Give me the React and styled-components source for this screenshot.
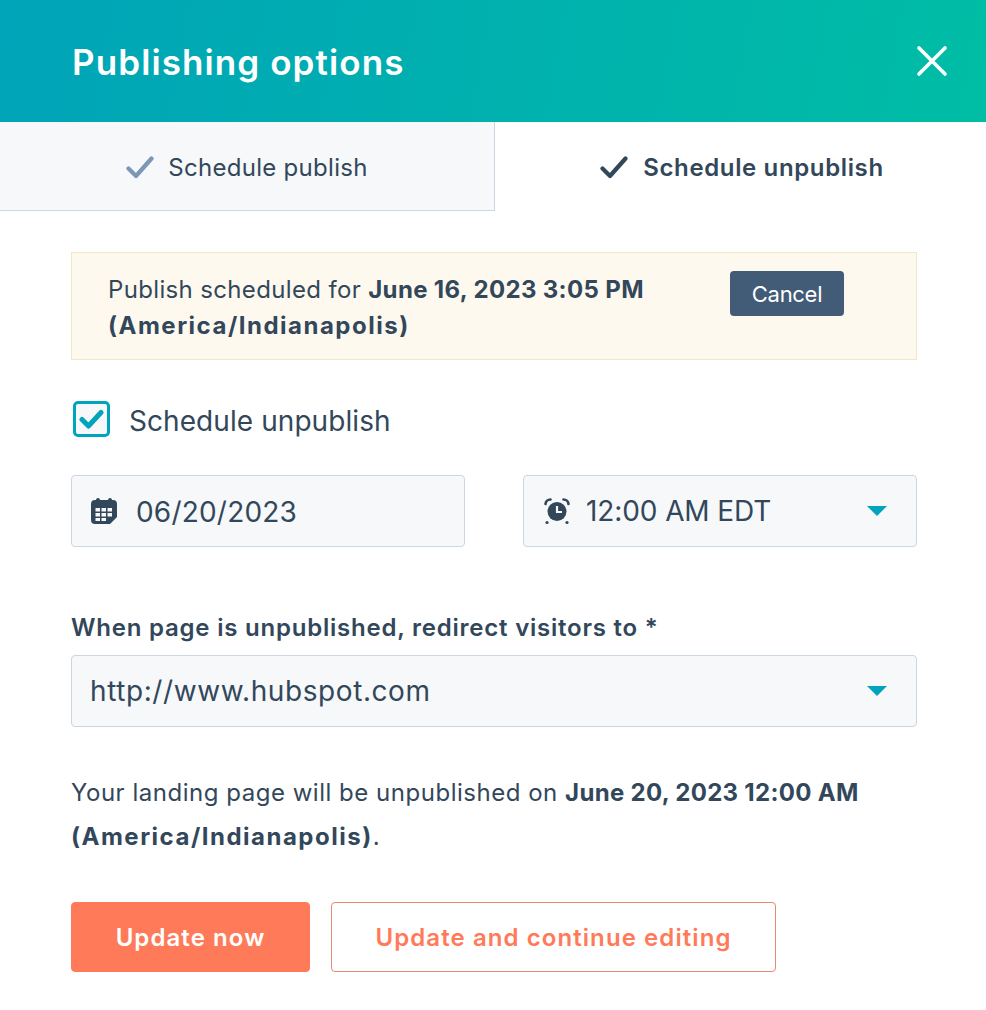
import React from "react";
import styled, { createGlobalStyle } from "styled-components";

const GlobalStyle = createGlobalStyle`
    html, body {
        margin: 0;
        padding: 0;
        background: #ffffff;
    }
    body {
        font-family: "Inter", "Liberation Sans", sans-serif;
        color: #33475b;
    }
`;

const Modal = styled.div`
    width: 986px;
    height: 1010px;
    display: flex;
    flex-direction: column;
    overflow: hidden;
`;

const Header = styled.header`
    height: 122px;
    flex-shrink: 0;
    display: flex;
    align-items: center;
    justify-content: space-between;
    padding: 0 38px 0 72px;
    background: linear-gradient(100deg, #00a4b8 0%, #00bda5 100%);
`;

const Title = styled.h1`
    margin: 0;
    padding-top: 2px;
    color: #ffffff;
    font-size: 35px;
    font-weight: 600;
    letter-spacing: 1.1px;
`;

const CloseButton = styled.button`
    width: 32px;
    height: 32px;
    padding: 0;
    border: 0;
    background: none;
    display: flex;
`;

const Tabs = styled.div`
    display: flex;
    height: 89px;
    flex-shrink: 0;
`;

const Tab = styled.div`
    flex: ${(p) => (p.$active ? "1" : "0 0 495px")};
    display: flex;
    align-items: center;
    justify-content: center;
    gap: ${(p) => (p.$active ? "15px" : "14px")};
    padding-top: ${(p) => (p.$active ? "1px" : "2px")};
    padding-left: ${(p) => (p.$active ? "3px" : "0")};
    font-size: 24px;
    letter-spacing: ${(p) => (p.$active ? "0.63px" : "0.3px")};
    font-weight: ${(p) => (p.$active ? 600 : 400)};
    background: ${(p) => (p.$active ? "#ffffff" : "#f6f8fa")};
    border-right: ${(p) => (p.$active ? "0" : "1px solid #cbd6e2")};
    border-bottom: ${(p) => (p.$active ? "0" : "1px solid #cbd6e2")};
    box-sizing: border-box;
`;

const Content = styled.main`
    padding: 41px 69px 0 71px;
    display: flex;
    flex-direction: column;
`;

const Notice = styled.div`
    height: 108px;
    box-sizing: border-box;
    display: flex;
    align-items: flex-start;
    padding: 18px 0 0 36px;
    background: #fef9ef;
    border: 1px solid #f2e8c9;
`;

const NoticeText = styled.p`
    margin: 1px 0 0;
    width: 586px;
    font-size: 24px;
    line-height: 36px;
    letter-spacing: 0.35px;
`;

const Zone = styled.b`
    letter-spacing: 1.5px;
`;

const CancelButton = styled.button`
    width: 114px;
    height: 45px;
    margin-left: 36px;
    border: 0;
    border-radius: 4px;
    background: #425b76;
    color: #ffffff;
    font-family: inherit;
    font-size: 22px;
    letter-spacing: -0.3px;
`;

const CheckRow = styled.label`
    display: flex;
    align-items: center;
    gap: 19px;
    margin: 41px 0 39px 2px;
    height: 35px;
    font-size: 28px;
    letter-spacing: 0.07px;
`;

const CheckText = styled.span`
    padding-top: 4px;
`;

const CheckBox = styled.span`
    width: 37px;
    height: 36px;
    box-sizing: border-box;
    border: 3px solid #00a4bd;
    border-radius: 5px;
    background: #f6f8fa;
    display: flex;
    align-items: center;
    justify-content: center;
`;

const FieldRow = styled.div`
    display: flex;
    justify-content: space-between;
`;

const Field = styled.div`
    width: ${(p) => p.$width || "394px"};
    height: 72px;
    box-sizing: border-box;
    display: flex;
    align-items: center;
    gap: ${(p) => p.$gap || "19px"};
    padding: 0 29px 0 ${(p) => p.$left || "19px"};
    background: #f6f8fa;
    border: 1px solid #cbd6e2;
    border-radius: 4px;
    font-size: 28px;
`;

const FieldValue = styled.span`
    flex: 1;
    padding-top: ${(p) => p.$drop || "0"};
    letter-spacing: ${(p) => p.$spacing || "0"};
`;

const Caret = styled.span`
    width: 0;
    height: 0;
    border-left: 10px solid transparent;
    border-right: 10px solid transparent;
    border-top: 10px solid #00a4bd;
`;

const Label = styled.div`
    margin: 66px 0 12px;
    font-size: 24px;
    line-height: 30px;
    font-weight: 600;
    letter-spacing: 0.78px;
`;

const Summary = styled.p`
    margin: 44px 0 43px;
    font-size: 24px;
    line-height: 44px;
    letter-spacing: 0.52px;
`;

const Bold = styled.b`
    letter-spacing: 0.3px;
`;

const Actions = styled.div`
    display: flex;
    gap: 21px;
`;

const ActionButton = styled.button`
    width: ${(p) => p.$width};
    height: 70px;
    box-sizing: border-box;
    border: 1px solid ${(p) => (p.$primary ? "#ff7a59" : "#e58a6f")};
    border-radius: 4px;
    background: ${(p) => (p.$primary ? "#ff7a59" : "#ffffff")};
    color: ${(p) => (p.$primary ? "#ffffff" : "#ff7a59")};
    font-family: inherit;
    font-size: 24px;
    font-weight: 600;
    letter-spacing: 1.08px;
`;

function Check({ color }) {
    return (
        <svg width="28" height="24" viewBox="0 0 28 24" fill="none">
            <path d="M2.5 13.5 L10 21 L25.5 3.5" stroke={color} strokeWidth="4.2" strokeLinecap="round" strokeLinejoin="round" />
        </svg>
    );
}

function CalendarIcon() {
    return (
        <svg width="26" height="28" viewBox="0 0 26 28">
            <path d="M5 3 a2 2 0 0 1 4 0 h8 a2 2 0 0 1 4 0 h1 a4 4 0 0 1 4 4 v13 l-7 7 H4 a4 4 0 0 1 -4 -4 V7 a4 4 0 0 1 4 -4 z" fill="#33475b" />
            <g fill="#f6f8fa">
                <rect x="4.5" y="11" width="4.5" height="3.5" />
                <rect x="10.5" y="11" width="4.5" height="3.5" />
                <rect x="16.5" y="11" width="4.5" height="3.5" />
                <rect x="4.5" y="16" width="4.5" height="3.5" />
                <rect x="10.5" y="16" width="4.5" height="3.5" />
                <rect x="16.5" y="16" width="4.5" height="3.5" />
                <rect x="4.5" y="21" width="4.5" height="3" />
                <rect x="10.5" y="21" width="4.5" height="3" />
            </g>
        </svg>
    );
}

function ClockIcon() {
    return (
        <svg width="28" height="28" viewBox="0 0 28 28" fill="none">
            <circle cx="14" cy="14.5" r="9.5" fill="#33475b" />
            <path d="M14 9 V15 H19" stroke="#f6f8fa" strokeWidth="2.2" />
            <path d="M2.5 7 A5 5 0 0 1 7.5 2.5 M25.5 7 A5 5 0 0 0 20.5 2.5" stroke="#33475b" strokeWidth="2.6" strokeLinecap="round" />
            <circle cx="4" cy="25.5" r="1.6" fill="#33475b" />
            <circle cx="24" cy="25.5" r="1.6" fill="#33475b" />
        </svg>
    );
}

export default function App() {
    return (
        <Modal>
            <GlobalStyle />
            <Header>
                <Title>Publishing options</Title>
                <CloseButton>
                    <svg width="32" height="32" viewBox="0 0 32 32" fill="none">
                        <path d="M3 3 L29 29 M29 3 L3 29" stroke="#ffffff" strokeWidth="3.6" strokeLinecap="round" />
                    </svg>
                </CloseButton>
            </Header>
            <Tabs>
                <Tab>
                    <Check color="#7c98b6" />
                    Schedule publish
                </Tab>
                <Tab $active>
                    <Check color="#33475b" />
                    Schedule unpublish
                </Tab>
            </Tabs>
            <Content>
                <Notice>
                    <NoticeText>
                        Publish scheduled for <b>June 16, 2023 3:05 PM</b> <Zone>(America/Indianapolis)</Zone>
                    </NoticeText>
                    <CancelButton>Cancel</CancelButton>
                </Notice>
                <CheckRow>
                    <CheckBox>
                        <svg width="25" height="20" viewBox="0 0 25 20" fill="none">
                            <path d="M3 10.5 L9.5 17 L22 3.5" stroke="#00a4bd" strokeWidth="5" strokeLinecap="round" strokeLinejoin="round" />
                        </svg>
                    </CheckBox>
                    <CheckText>Schedule unpublish</CheckText>
                </CheckRow>
                <FieldRow>
                    <Field>
                        <CalendarIcon />
                        <FieldValue $drop="2px" $spacing="0.2px">06/20/2023</FieldValue>
                    </Field>
                    <Field $gap="15px">
                        <ClockIcon />
                        <FieldValue $spacing="-0.1px">12:00 AM EDT</FieldValue>
                        <Caret />
                    </Field>
                </FieldRow>
                <Label>When page is unpublished, redirect visitors to *</Label>
                <Field $width="846px" $left="18px">
                    <FieldValue $spacing="0.58px">http://www.hubspot.com</FieldValue>
                    <Caret />
                </Field>
                <Summary>
                    Your landing page will be unpublished on <Bold>June 20, 2023 12:00 AM</Bold> <Zone>(America/Indianapolis)</Zone>.
                </Summary>
                <Actions>
                    <ActionButton $primary $width="239px">Update now</ActionButton>
                    <ActionButton $width="445px">Update and continue editing</ActionButton>
                </Actions>
            </Content>
        </Modal>
    );
}
